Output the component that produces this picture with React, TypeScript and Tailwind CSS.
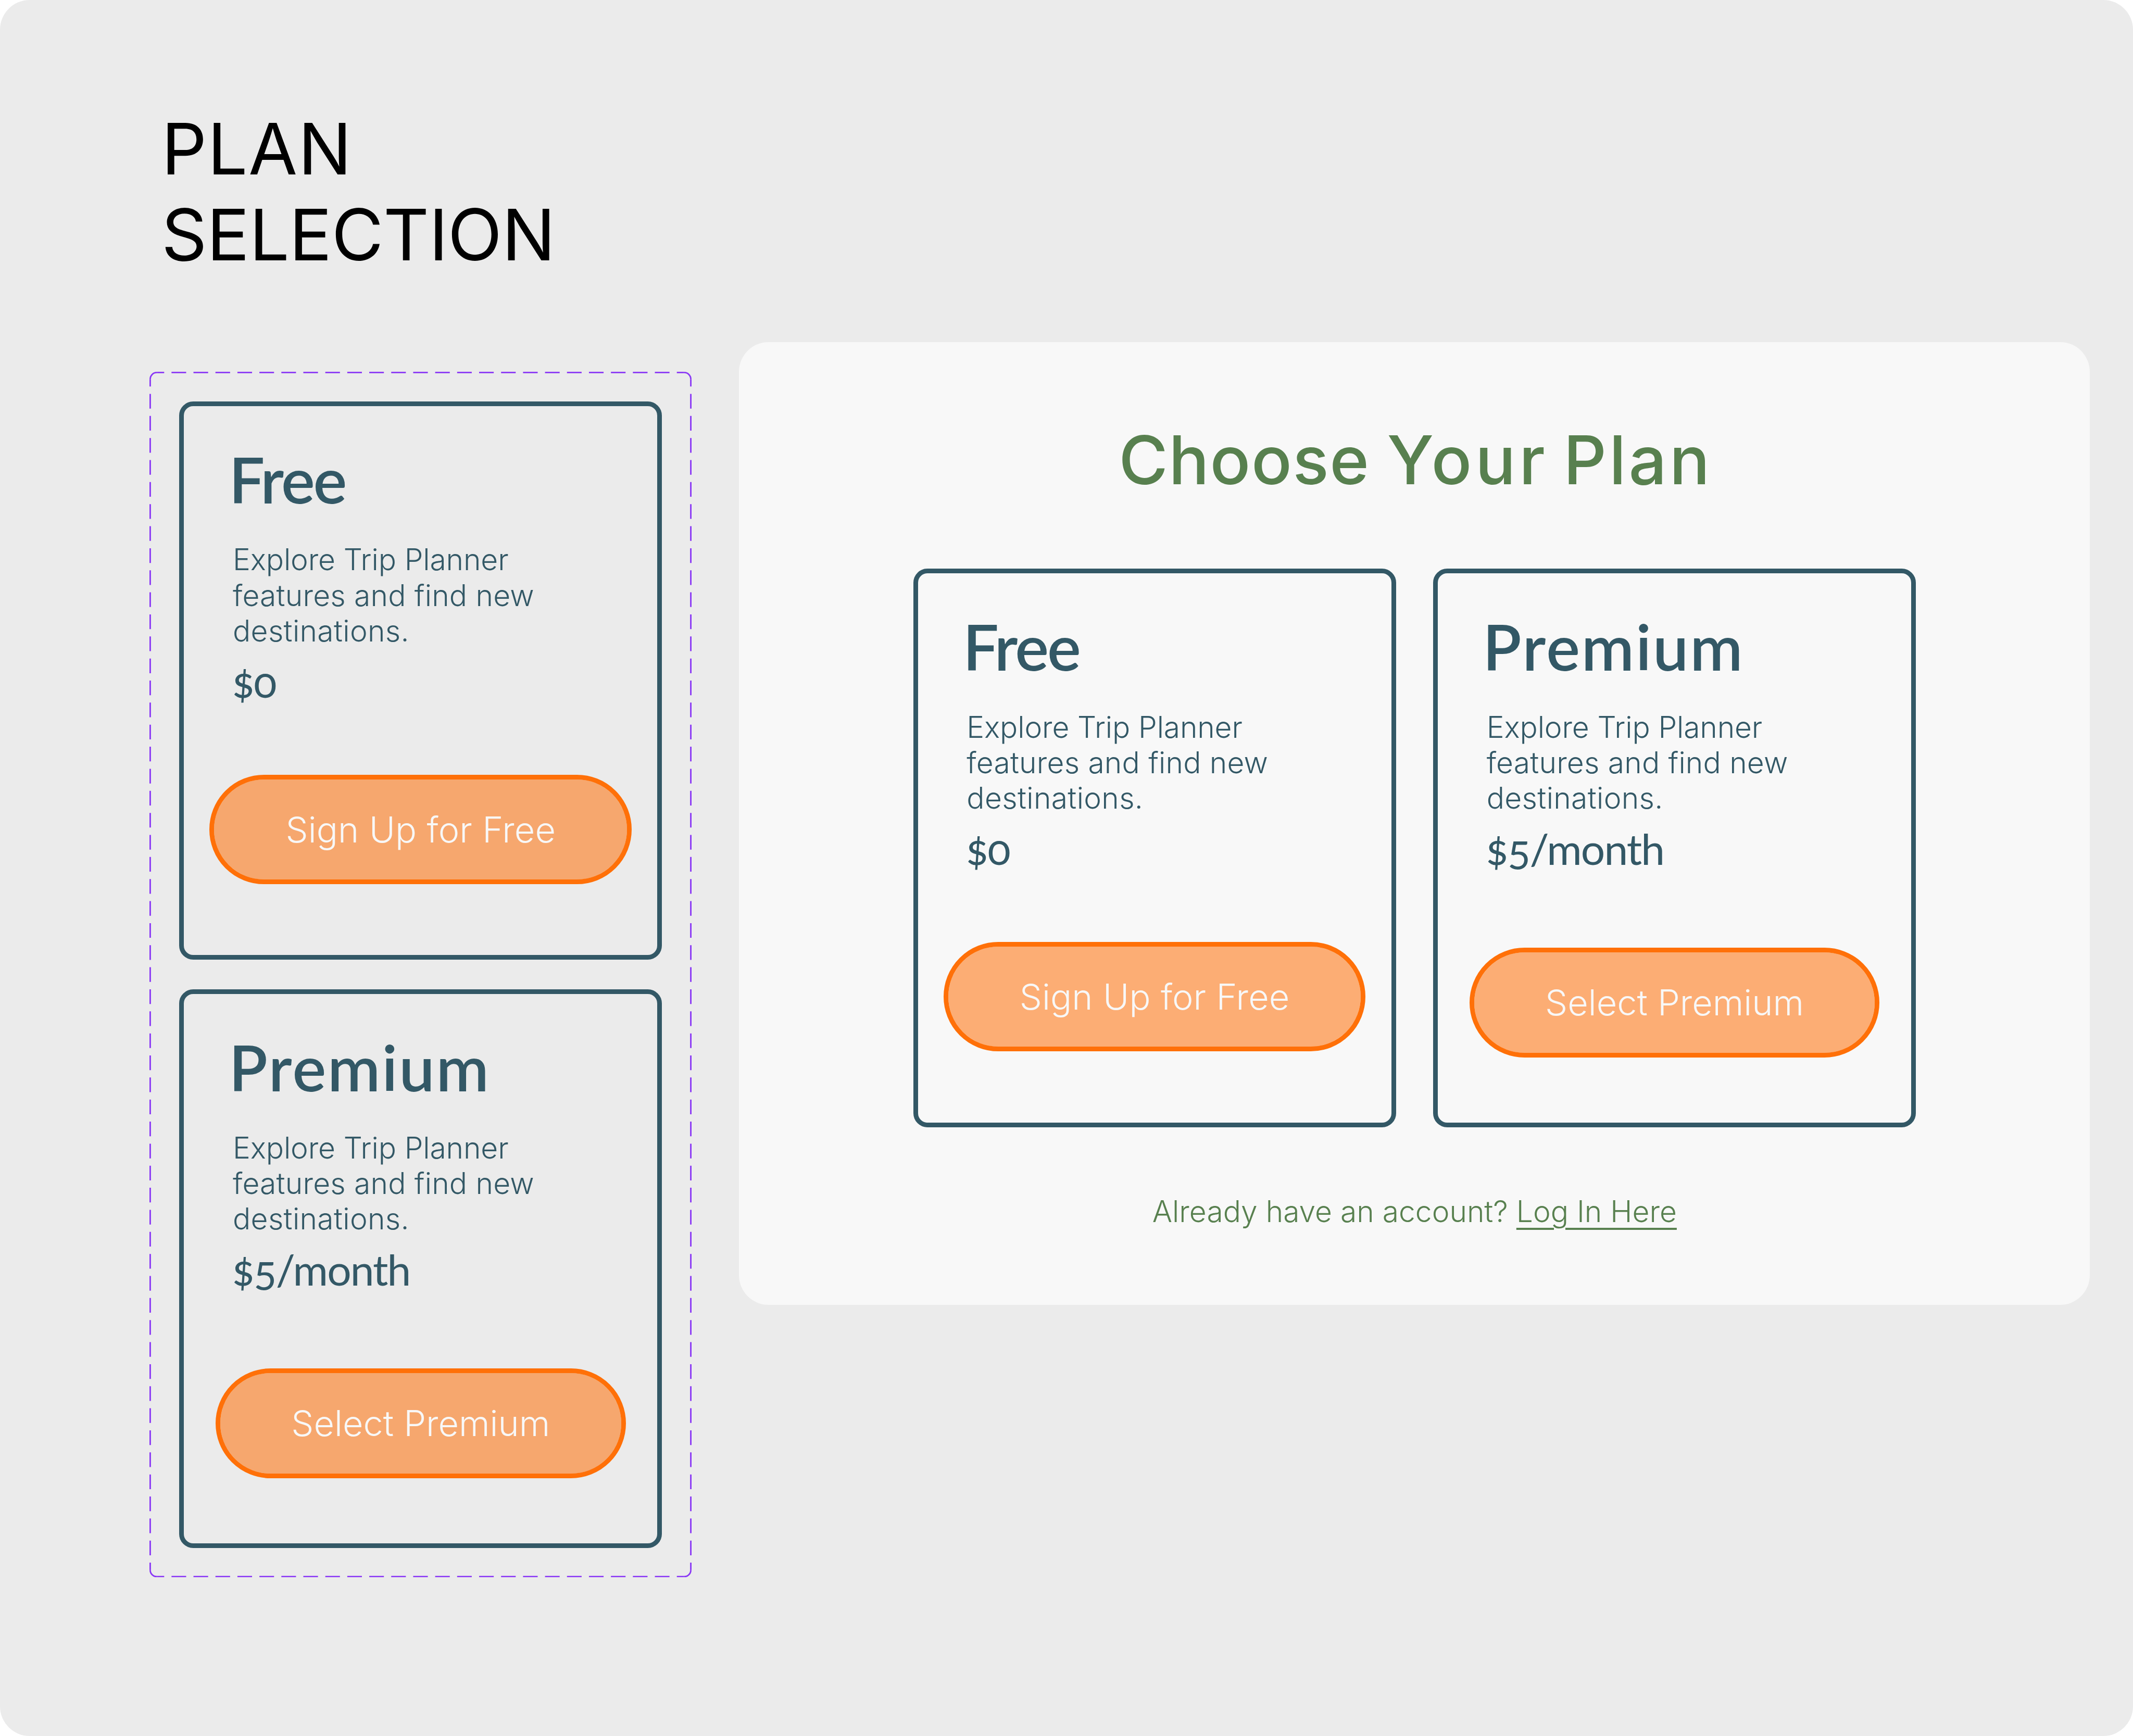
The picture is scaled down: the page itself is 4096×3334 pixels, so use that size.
type Plan = {
  name: string;
  nameClass: string;
  price: string;
  priceClass: string;
  action: string;
  actionClass: string;
};

const plans: Plan[] = [
  {
    name: "Free",
    nameClass: "tracking-[-3.2px]",
    price: "$0",
    priceClass: "tracking-[-2px]",
    action: "Sign Up for Free",
    actionClass: "mt-[130.5px] w-[810.7px] tracking-[0.15px]",
  },
  {
    name: "Premium",
    nameClass: "tracking-[2.8px]",
    price: "$5/month",
    priceClass: "tracking-[-1.9px]",
    action: "Select Premium",
    actionClass: "mt-[141.9px] w-[787.9px]",
  },
];

function PlanCard({ plan }: { plan: Plan }) {
  return (
    <article className="flex h-[1072.4px] w-[927.3px] shrink-0 flex-col rounded-[27px] border-[9px] border-[#335866] pt-[67px] text-[#335866]">
      <h3
        className={`ml-[86.4px] whitespace-nowrap font-['Lato',sans-serif] text-[122px] leading-[146px] font-semibold ${plan.nameClass}`}
      >
        {plan.name}
      </h3>
      <p className="mt-[48.4px] ml-[93.8px] font-['Inter',sans-serif] text-[56.9px] leading-[68.27px] font-light whitespace-nowrap">
        <span className="tracking-[-0.12px]">Explore Trip Planner</span>
        <br />
        <span className="tracking-[0.2px]">features and find new</span>
        <br />
        <span className="tracking-[0.35px]">destinations.</span>
      </p>
      <p
        className={`mt-[13px] ml-[91.8px] whitespace-nowrap font-['Lato',sans-serif] text-[82px] leading-[98px] [font-variant-numeric:oldstyle-nums] ${plan.priceClass}`}
      >
        {plan.price}
      </p>
      <button
        className={`flex h-[210.5px] items-center justify-center self-center rounded-full border-[9px] border-[#ff7008] bg-[#ff7008]/55 bg-clip-padding font-['Inter',sans-serif] text-[68.27px] font-light whitespace-nowrap text-[#f8f8f8] ${plan.actionClass}`}
      >
        {plan.action}
      </button>
    </article>
  );
}

/* Dashed outline: evenly spaced dashes on each side joined by solid rounded corners. */
function DashedOutline() {
  return (
    <svg
      className="pointer-events-none absolute inset-0 h-full w-full"
      viewBox="0 0 1464 3256"
      preserveAspectRatio="none"
      fill="none"
      stroke="#8a38f5"
      strokeWidth="4"
    >
      <g strokeDasharray="39.555 19.778" strokeDashoffset="19.778">
        <path d="M20 2H1444" />
        <path d="M20 3254H1444" />
      </g>
      <g strokeDasharray="39.704 19.852" strokeDashoffset="19.852">
        <path d="M2 20V3236" />
        <path d="M1462 20V3236" />
      </g>
      <path d="M2 20A18 18 0 0 1 20 2M1444 2A18 18 0 0 1 1462 20M1462 3236A18 18 0 0 1 1444 3254M20 3254A18 18 0 0 1 2 3236" />
    </svg>
  );
}

export default function App() {
  return (
    <div className="h-[3334px] w-[4096px] overflow-hidden bg-white">
      <main className="flex h-full flex-col rounded-[57px] bg-[#ebebeb] pt-[203.4px]">
        <h1 className="ml-[310px] font-['Inter',sans-serif] text-[136.5px] leading-[165px] font-normal text-black">
          <span className="tracking-[1.3px]">PLAN</span>
          <br />
          <span className="tracking-[-0.5px]">SELECTION</span>
        </h1>

        <div className="mt-[123.7px] ml-[287.3px] flex items-start gap-[91px]">
          <section className="relative mt-[56.9px] flex h-[2315.4px] w-[1041px] shrink-0 flex-col items-center gap-[56.9px] p-[56.9px]">
            <DashedOutline />
            {plans.map((plan) => (
              <PlanCard key={plan.name} plan={plan} />
            ))}
          </section>

          <section className="flex h-[1848.9px] w-[2594.1px] shrink-0 flex-col items-center rounded-[57px] bg-[#f8f8f8] pt-[148px] text-[#58804f]">
            <h2 className="pl-1 font-['Inter',sans-serif] text-[129px] leading-[156px] font-medium whitespace-nowrap">
              <span className="tracking-[1.5px] [word-spacing:-3px]">Choose </span>
              <span className="tracking-[6.5px] [word-spacing:-12px]">Your </span>
              <span className="tracking-[5px]">Plan</span>
            </h2>
            <div className="mt-[131.2px] flex gap-[71.1px]">
              {plans.map((plan) => (
                <PlanCard key={plan.name} plan={plan} />
              ))}
            </div>
            <p className="mt-[128px] font-['Inter',sans-serif] text-[56.9px] leading-[68.27px] font-light whitespace-nowrap">
              Already have an account?{" "}
              <a className="underline decoration-[3.5px] underline-offset-[11.4px]" href="#">
                Log In Here
              </a>
            </p>
          </section>
        </div>
      </main>
    </div>
  );
}
